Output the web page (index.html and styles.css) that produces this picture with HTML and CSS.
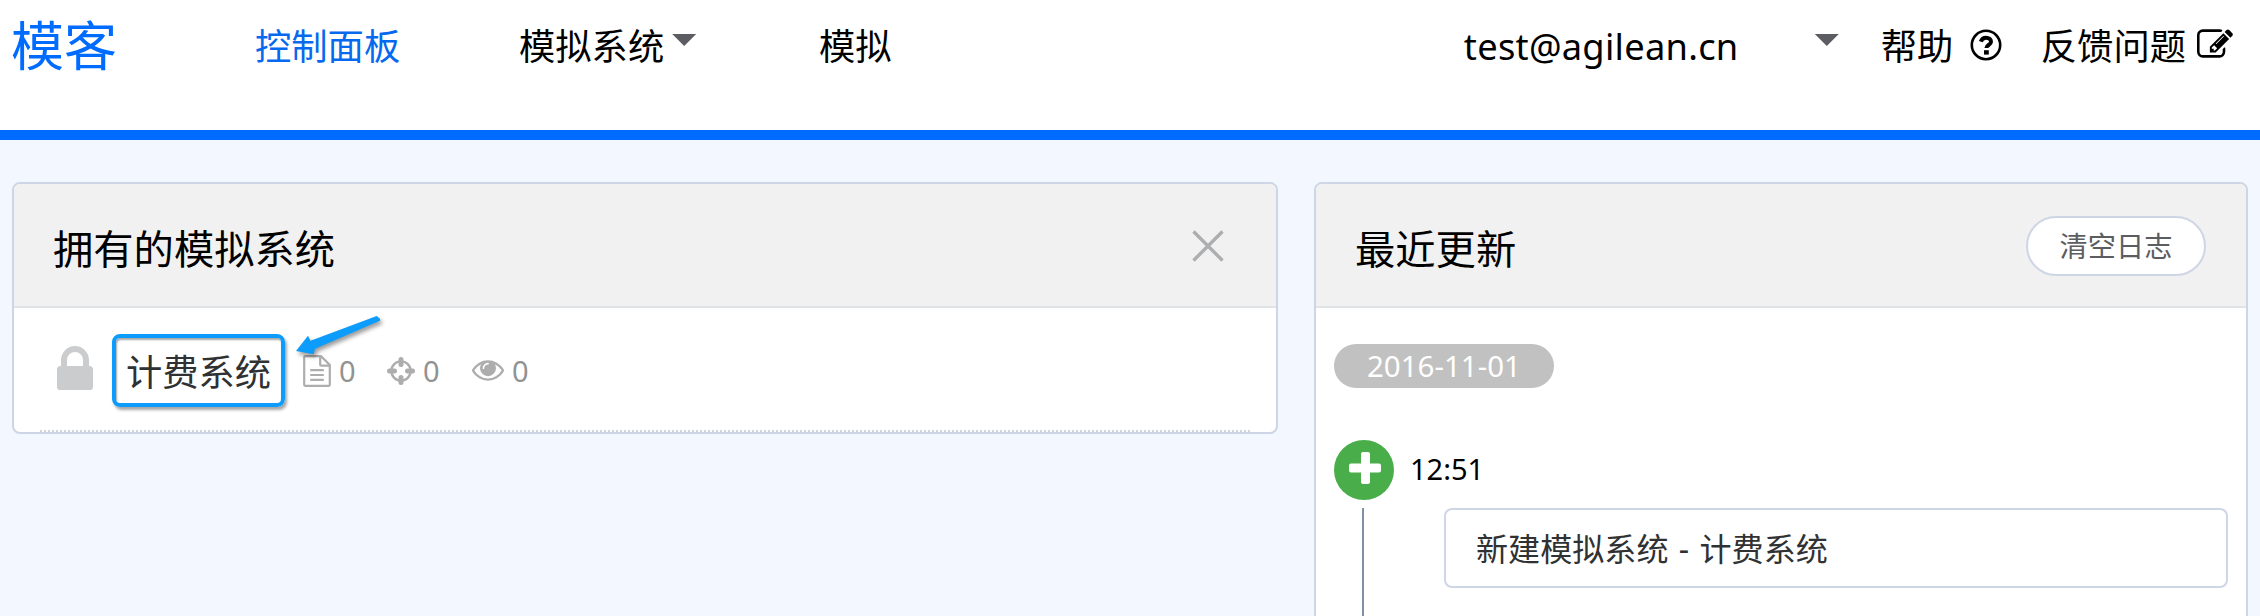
FILE: index.html
```html
<!DOCTYPE html>
<html lang="zh-CN">
<head>
<meta charset="utf-8">
<title>模客</title>
<link rel="stylesheet" href="styles.css">
</head>
<body>
<header class="topbar">
  <a class="logo">模客</a>
  <nav class="nav">
    <a class="nav-item active">控制面板</a>
    <a class="nav-item has-menu">模拟系统<i class="caret"></i></a>
    <a class="nav-item">模拟</a>
  </nav>
  <div class="tools">
    <a class="account"><span class="email">test@agilean.cn</span><i class="caret"></i></a>
    <a class="help">帮助
      <svg class="icon-help" viewBox="0 0 32 32"><circle cx="16" cy="16" r="14.2" fill="none" stroke="#000" stroke-width="2.6"/><path d="M10.8 12.6C11.8 9.8 13.6 8.7 16 8.7c3 0 5 1.700 5 4 0 3.300-4.600 3.300-4.600 6.300" fill="none" stroke="#000" stroke-width="4"/><path d="M14 21.200h4.800v4.400H14z"/></svg>
    </a>
    <a class="feedback">反馈问题
      <svg class="icon-edit" viewBox="0 126 1792 1412"><path d="M888 1184l116-116-152-152-116 116v56h96v96h56zm440-720q-16-16-33 1l-350 350q-17 17-1 33t33-1l350-350q17-17 1-33zm80 594v190q0 119-84.500 203.500t-203.500 84.500h-832q-119 0-203.500-84.500t-84.500-203.500v-832q0-119 84.500-203.500t203.500-84.500h832q63 0 117 25 15 7 18 23 3 17-9 29l-49 49q-14 14-32 8-23-6-45-6h-832q-66 0-113 47t-47 113v832q0 66 47 113t113 47h832q66 0 113-47t47-113v-126q0-13 9-22l64-64q15-15 35-7t20 29zm-96-738l288 288-672 672h-288v-288zm444 132l-92 92-288-288 92-92q28-28 68-28t68 28l152 152q28 28 28 68t-28 68z"/></svg>
    </a>
  </div>
</header>
<main class="content">
  <section class="panel systems">
    <div class="panel-head">
      <h2 class="panel-title">拥有的模拟系统</h2>
      <svg class="icon-close" viewBox="0 0 32 32"><path d="M1.500 1.500l29 29M30.500 1.500l-29 29" stroke="#adaeb0" stroke-width="3.400"/></svg>
    </div>
    <div class="system-row">
      <svg class="icon-lock" viewBox="320 128 1152 1408"><path d="M640 768h512v-192q0-106-75-181t-181-75-181 75-75 181v192zm832 96v576q0 40-28 68t-68 28h-960q-40 0-68-28t-28-68v-576q0-40 28-68t68-28h32v-192q0-184 132-316t316-132 316 132 132 316v192h32q40 0 68 28t28 68z"/></svg>
      <a class="system-name">计费系统
        <svg class="arrow" viewBox="0 0 90 44"><path d="M2 37L14 21.700l2.500 5L82.700 2l3.300 2.700v2L21 34.700l-1.300 5.600z"/></svg>
      </a>
      <span class="stat stat-doc"><svg class="icon-doc" viewBox="0 0 28 32"><path d="M1.200 2.200q0-1 1-1H18L26.800 10v19.800q0 1-1 1H2.200q-1 0-1-1zM17.200 1.500v8.200q0 1 1 1h8.300M7.200 15.200h13.600M7.200 20h13.600M7.200 24.800h13.600"/></svg>0</span>
      <span class="stat stat-aim"><svg class="icon-aim" viewBox="0 0 28 28"><circle cx="14" cy="14" r="9.600"/><path d="M14 2.500v5M14 20.500v5M2.500 14h5M20.500 14h5"/></svg>0</span>
      <span class="stat stat-eye"><svg class="icon-eye" viewBox="0 384 1792 1152"><path d="M1664 960q-152-236-381-353 61 104 61 225 0 185-131.500 316.500t-316.500 131.500-316.500-131.500-131.500-316.500q0-121 61-225-229 117-381 353 133 205 333.500 326.500t434.500 121.500 434.500-121.500 333.500-326.500zm-720-384q0-20-14-34t-34-14q-125 0-214.500 89.500t-89.500 214.500q0 20 14 34t34 14 34-14 14-34q0-86 61-147t147-61q20 0 34-14t14-34zm848 384q0 34-20 69-140 230-376.500 368.500t-499.500 138.500-499.500-139-376.500-368q-20-35-20-69t20-69q140-229 376.500-368t499.500-139 499.500 139 376.500 368q20 35 20 69z"/></svg>0</span>
    </div>
  </section>
  <section class="panel updates">
    <div class="panel-head">
      <h2 class="panel-title">最近更新</h2>
      <button class="clear">清空日志</button>
    </div>
    <div class="log">
      <span class="date">2016-11-01</span>
      <div class="event-head">
        <span class="badge"><svg class="icon-plus" viewBox="0 0 32 32"><path d="M14 0h5q2 0 2 2v9.500h9q2 0 2 2v5q0 2-2 2h-9V30q0 2-2 2h-5q-2 0-2-2v-9.500H2q-2 0-2-2v-5q0-2 2-2h10V2q0-2 2-2z"/></svg></span>
        <time class="time">12:51</time>
      </div>
      <div class="event-body">
        <div class="card">新建模拟系统 - 计费系统</div>
      </div>
    </div>
  </section>
</main>
</body>
</html>
```
FILE: styles.css
```css
* { box-sizing: border-box; }
html, body { height: 100%; }
body {
  margin: 0;
  display: flex;
  flex-direction: column;
  overflow: hidden;
  background: #f3f7ff;
  color: #000;
  font-family: "Noto Sans", "Noto Sans CJK SC", sans-serif;
}
svg { display: block; flex: none; }

.topbar {
  flex: none;
  display: flex;
  align-items: flex-start;
  height: 140px;
  padding: 0 27px 0 11px;
  background: #fff;
  border-bottom: 10px solid #006cff;
  font-size: 36.3px;
  line-height: 92px;
  white-space: nowrap;
}
.logo { width: 244px; color: #006cff; font-size: 53px; }
.nav { display: flex; }
.nav-item { width: 264px; }
.nav-item.has-menu { width: 300px; }
.nav-item.active { color: #0669ee; }
.has-menu, .account, .help, .feedback { display: flex; }
.caret {
  width: 24px;
  height: 12px;
  margin-top: 34px;
  background: #5c5d63;
  clip-path: polygon(0 0, 100% 0, 50% 100%);
}
.has-menu .caret { margin-left: 8px; }
.tools { display: flex; margin-left: auto; }
.account { width: 417px; }
.email { width: 351px; letter-spacing: .25px; }
.help { width: 160px; }
.icon-help { width: 32px; height: 32px; margin: 29px 0 0 17px; }
.icon-edit { width: 36px; height: 29px; margin: 29px 0 0 11px; }

.content {
  flex: 1;
  display: grid;
  grid-template-columns: 1266px 934px;
  column-gap: 36px;
  align-items: start;
  min-height: 0;
  padding: 42px 12px 0;
}
.panel {
  background: #fff;
  border: 2px solid #ced5e4;
  border-radius: 8px;
  overflow: hidden;
}
.panel-head {
  display: flex;
  align-items: center;
  justify-content: space-between;
  height: 124px;
  padding: 0 40px 0 39px;
  background: #f1f1f1;
  border-bottom: 2px solid #e1e4e7;
}
.panel-title { margin: 8px 0 0; font-size: 40.3px; font-weight: 400; line-height: 60px; }
.icon-close { width: 32px; height: 32px; margin: 2px 12px 0 0; }
.clear {
  width: 180px;
  height: 60px;
  margin-top: 2px;
  padding: 0;
  border: 2px solid #ced5e4;
  border-radius: 30px;
  background: #fff;
  color: #5c5d60;
  font: 28.2px/56px "Noto Sans", "Noto Sans CJK SC", sans-serif;
}

.system-row {
  display: flex;
  align-items: flex-start;
  height: 124px;
  margin: 0 26px;
  padding: 26px 0 0 17px;
  border-bottom: 2px dotted #ced5da;
}
.icon-lock { width: 36px; height: 44px; margin-top: 12px; fill: #cbcccd; }
.system-name {
  position: relative;
  width: 173px;
  height: 73px;
  margin-left: 19px;
  border: 4.500px solid #0c9cfb;
  border-radius: 8px;
  box-shadow: 2px 3px 3px rgba(0, 0, 0, .35), inset 1px 2px 2px rgba(0, 0, 0, .35);
  color: #303133;
  font-size: 36.3px;
  line-height: 69px;
  text-align: center;
}
.arrow {
  position: absolute;
  left: 178px;
  top: -24px;
  width: 90px;
  height: 44px;
  fill: #0c9cfb;
  filter: drop-shadow(2px 3px 2px rgba(0, 0, 0, .4));
}
.stat { display: flex; align-items: center; gap: 8px; height: 73px; color: #929292; font-size: 29px; }
.stat-doc { width: 84px; margin-left: 18px; }
.stat-aim { width: 85px; }
.icon-doc { width: 28px; height: 32px; fill: none; stroke: #adadad; stroke-width: 2.2; }
.icon-aim { width: 28px; height: 28px; fill: none; stroke: #adadad; stroke-width: 2.4; }
.icon-aim path { stroke-width: 5; stroke-linecap: round; }
.icon-eye { width: 32px; height: 21px; fill: #adadad; }

.updates { height: 460px; }
.log { padding: 36px 18px 0; }
.date {
  display: block;
  width: 220px;
  height: 44px;
  border-radius: 22px;
  background: #c1c1c1;
  color: #fff;
  font-size: 29.500px;
  line-height: 43px;
  text-align: center;
}
.event-head { display: flex; align-items: center; gap: 16px; height: 60px; margin-top: 52px; }
.badge {
  display: flex;
  width: 60px;
  height: 60px;
  padding: 12px 0 0 15px;
  border-radius: 50%;
  background: #49ae49;
}
.icon-plus { width: 32px; height: 32px; fill: #fff; }
.time { margin-top: -2px; font-size: 29px; line-height: 60px; }
.event-body {
  height: 140px;
  margin: 8px 0 0 28px;
  padding-left: 80px;
  border-left: 2px solid #8092a5;
}
.card {
  height: 80px;
  padding-left: 30px;
  border: 2px solid #ced5e4;
  border-radius: 8px;
  color: #303133;
  font-size: 32.1px;
  line-height: 78px;
  word-spacing: 2px;
  white-space: nowrap;
}
```
